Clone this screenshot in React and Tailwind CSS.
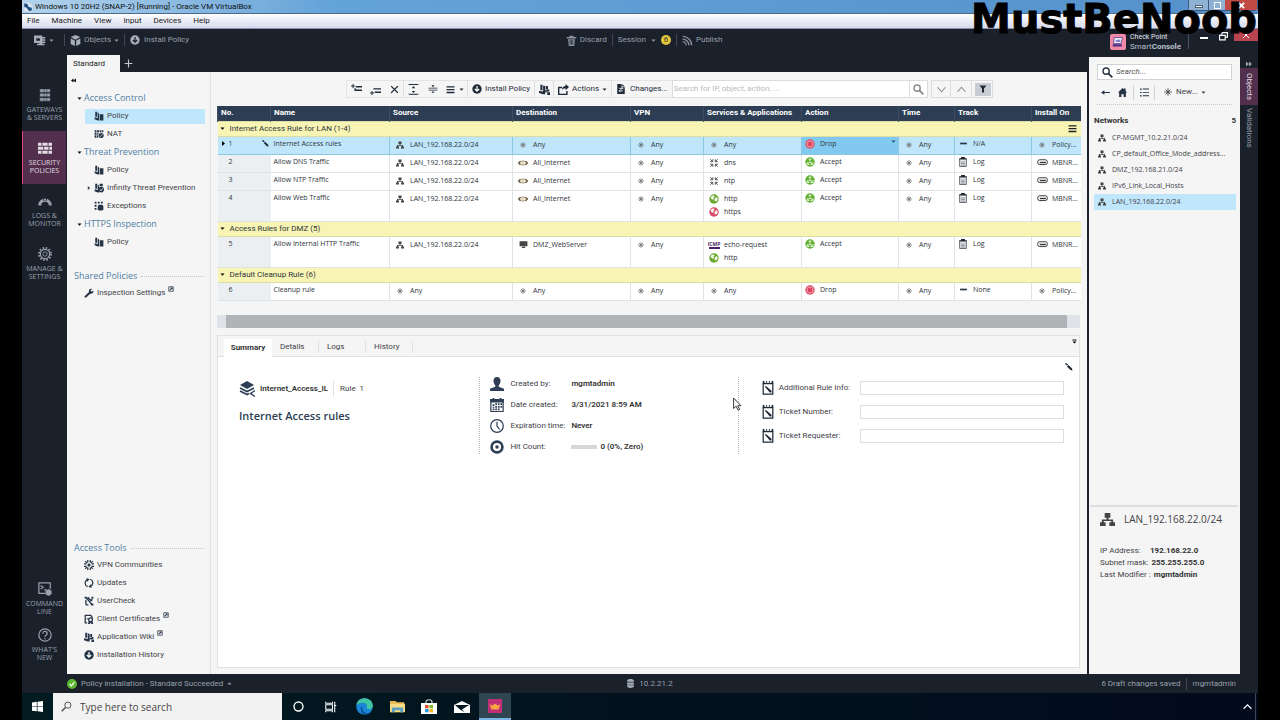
const Svg = ({ size = 10, box = 16, className = "", children }) => (
  <svg
    width={size}
    height={size}
    viewBox={`0 0 ${box} ${box}`}
    fill="currentColor"
    className={`shrink-0 ${className}`}
    aria-hidden="true"
  >
    {children}
  </svg>
);

const line = { fill: "none", stroke: "currentColor", strokeWidth: 2 };
const thin = { fill: "none", stroke: "currentColor", strokeWidth: 1.4 };

const NetworkIcon = (p) => (
  <Svg {...p}>
    <path d="M5 1h6v5H9v2h5v3h2v4h-6v-4h2V9.500H4V11h2v4H0v-4h2V8h5V6H5z" />
  </Svg>
);
const AnyIcon = (p) => (
  <Svg {...p}>
    <path d="M8 2v12M2 8h12M4 4l8 8M12 4l-8 8" {...thin} />
  </Svg>
);
const InternetIcon = (p) => (
  <Svg {...p}>
    <rect x="3" y="5" width="10" height="6" fill="#e6dfc4" />
    <path d="M4 5 1 8l3 3M12 5l3 3-3 3" fill="none" stroke="#5a4a2c" strokeWidth="2" />
    <path d="M5 5h6M5 11h6" stroke="#a2977a" strokeWidth="1.500" />
  </Svg>
);
const HostIcon = (p) => (
  <Svg {...p}>
    <path d="M1 2h14v9H1zM5 12h6v2H5z" />
  </Svg>
);
const ServiceIcon = (p) => (
  <Svg {...p}>
    <path d="M2 2l4 4M6 2v4H2M14 2l-4 4M10 2v4h4M2 14l4-4M6 14v-4H2M14 14l-4-4M10 14v-4h4" {...thin} />
  </Svg>
);
const GlobeIcon = ({ color, ...p }) => (
  <Svg {...p}>
    <circle cx="8" cy="8" r="7.500" fill={color} />
    <path d="M3 4l4-2 2 2-2 2 1 2-2 1-3-2zM10 6l3-1 1 3-2 4-3-1v-3z" fill="#f3f7ee" />
  </Svg>
);
const IcmpIcon = () => (
  <span className="flex h-[9px] w-[11px] shrink-0 items-center justify-center border-b-2 border-[#4d1f6b] text-[5px] leading-[6px] font-bold text-[#4d1f6b]">
    ICMP
  </span>
);
const DropIcon = (p) => (
  <Svg {...p}>
    <circle cx="8" cy="8" r="7.500" fill="#dd4560" />
    <circle cx="8" cy="8" r="5" fill="#dd4560" stroke="#f6ccd3" strokeWidth="1.200" />
  </Svg>
);
const AcceptIcon = (p) => (
  <Svg {...p}>
    <circle cx="8" cy="8" r="7.500" fill="#62b22f" />
    <path d="M8 3v4M6 4.500 8 2.500l2 2M8 8l-4 3M8 8l4 3M3.500 8.500V12H7M12.500 8.500V12H9" fill="none" stroke="#fff" strokeWidth="1.400" />
  </Svg>
);
const LogIcon = (p) => (
  <Svg {...p}>
    <path d="M2 2h3V0h6v2h3v3H2z" fill="#20252c" />
    <path d="M2.700 4v11.300h10.600V4" fill="#e8eaec" stroke="#4c525a" strokeWidth="1.400" />
    <path d="M5 8h6M5 10.500h6M5 13h6" stroke="#70767d" strokeWidth="1.200" />
  </Svg>
);
const DashIcon = (p) => (
  <Svg {...p}>
    <path d="M2 6.500h12v3H2z" />
  </Svg>
);
const GatewayIcon = (p) => (
  <Svg {...p}>
    <rect x="1" y="4" width="14" height="7" rx="3" {...thin} />
    <path d="M4 7h9v2H4z" />
  </Svg>
);
const InstallIcon = ({ arrow = "#fff", ...p }) => (
  <Svg {...p}>
    <circle cx="8" cy="8" r="7.500" />
    <path d="M8 3v8M4.500 8 8 11.500 11.500 8" fill="none" stroke={arrow} strokeWidth="2" />
  </Svg>
);
const PolicyIcon = (p) => (
  <Svg {...p}>
    <path d="M2 1h3v8H2zM1 10l5 1v4l-5-2zM6 2l2 2v11H6zM9 5h6v10H9z" />
  </Svg>
);
const NatIcon = (p) => (
  <Svg {...p}>
    <path d="M1 2h3v3H1zM5 2h3v3H5zM9 2h3v3H9zM13 2h2v3h-2zM1 6h3v3H1zM5 6h2v3H5zM1 10h3v4H1zM5 10h2v4H5z" />
    <circle cx="11.500" cy="10.500" r="4" />
    <path d="M9.500 12.500l4-4" stroke="#f4f4f4" strokeWidth="1.200" />
  </Svg>
);
const ThreatIcon = (p) => (
  <Svg {...p}>
    <path d="M2 1h3v8H2zM1 10l5 1v4l-5-2zM6 2l2 2v11H6zM9 1h5v4H9z" />
    <circle cx="11.500" cy="10.500" r="4.500" />
    <path d="M9.500 10.500l1.500 2 3-4" fill="none" stroke="#fff" strokeWidth="1.300" />
  </Svg>
);
const ExceptionIcon = (p) => (
  <Svg {...p}>
    <path d="M1 1h3v3H1zM6 1h3v3H6zM11 1h3v3h-3zM1 6h3v3H1zM1 11h3v3H1z" />
    <path d="M8 6h5l2 2v5l-2 2H8l-2-2V8z" />
  </Svg>
);
const WrenchIcon = (p) => (
  <Svg {...p}>
    <path d="M1 13 8 6.500C7 3.500 9.500.500 13 1.500L10.500 4l1.500 1.800L15 4c.8 3.500-2 6-5 5l-6.500 6C2 16 0 14.500 1 13z" />
  </Svg>
);
const ExternalIcon = (p) => (
  <Svg {...p}>
    <path d="M2 2h12v12H2z" {...line} />
    <path d="M6 4h6v6L10 8l-4 4-2-2 4-4z" />
  </Svg>
);
const VpnIcon = (p) => (
  <Svg {...p}>
    <path d="M5 0h2v4H5zM9 0h2v4H9zM5 12h2v4H5zM9 12h2v4H9zM0 5h4v2H0zM0 9h4v2H0zM12 5h4v2h-4zM12 9h4v2h-4z" />
    <circle cx="8" cy="8" r="2.500" />
    <path d="M2 2l3 3M14 2l-3 3M2 14l3-3M14 14l-3-3" {...line} />
  </Svg>
);
const UpdateIcon = (p) => (
  <Svg {...p}>
    <path d="M6 14A6 6 0 0 1 5 3M10 2a6 6 0 0 1 1 11" {...line} />
    <path d="M4 0l5 2-4 4zM12 16l-5-2 4-4z" />
  </Svg>
);
const UserCheckIcon = (p) => (
  <Svg {...p}>
    <path d="M3 14V6M3 2l10 12M6 2l6 6M3 14h4M12 8l1-4" {...line} />
    <path d="M1 1h3v3H1zM12 1h3v3h-3zM11 12h4v3h-4z" />
  </Svg>
);
const CertIcon = (p) => (
  <Svg {...p}>
    <path d="M5 14H2V2h9l2 3v2" {...line} />
    <circle cx="10.500" cy="9" r="3" {...line} />
    <path d="M8 11l-2 5h3l1.500-2 1.500 2h3l-2-5" />
    <path d="M4 7h4v1.500H4z" />
  </Svg>
);
const BundleIcon = (p) => (
  <Svg {...p}>
    <path d="M2 1h3v8H2zM0 10l6 1v4l-6-2zM6 2l3 1v12H6zM10 3h3v5h-3z" />
    <path d="M9 9h3v3H9zM12 12h4v4h-4zM12 8h3v3h-3z" />
  </Svg>
);
const PencilIcon = (p) => (
  <Svg {...p}>
    <path d="M0 0l4 1 2 2-2 2-2-1zM7 4l7 7 1 4-4-1-7-7z" />
  </Svg>
);
const MenuIcon = (p) => (
  <Svg {...p}>
    <path d="M1 2h14v2.500H1zM1 7h14v2.500H1zM1 12h14v2.500H1z" />
  </Svg>
);
const SearchIcon = ({ width = 2, ...p }) => (
  <Svg {...p}>
    <circle cx="6" cy="6" r="4.500" fill="none" stroke="currentColor" strokeWidth={width} />
    <path d="M9.500 9.500 15 15" stroke="currentColor" strokeWidth={width + 0.6} />
  </Svg>
);

const Caret = ({ className = "" }) => (
  <Svg size={5} box={10} className={className}>
    <path d="M1 3h8L5 7.500z" />
  </Svg>
);

const icons = {
  net: <NetworkIcon size={8} className="text-[#444]" />,
  any: <AnyIcon size={8} className="text-[#666]" />,
  inet: <InternetIcon size={10} />,
  host: <HostIcon size={9} className="text-[#444]" />,
  svc: <ServiceIcon size={10} className="text-[#444]" />,
  green: <GlobeIcon size={10} color="#6aa82f" />,
  red: <GlobeIcon size={10} color="#db4a66" />,
  icmp: <IcmpIcon />,
  drop: <DropIcon size={10} />,
  accept: <AcceptIcon size={10} />,
  log: <LogIcon size={10} />,
  dash: <DashIcon size={9} className="text-[#263447]" />,
  gw: <GatewayIcon size={11} className="text-[#333]" />,
};

const columns = [
  ["No.", 53],
  ["Name", 119],
  ["Source", 123],
  ["Destination", 118],
  ["VPN", 73],
  ["Services & Applications", 98],
  ["Action", 97],
  ["Time", 56],
  ["Track", 77],
  ["Install On", 49],
];

const lan = [["net", "LAN_192.168.22.0/24"]];
const any = [["any", "Any"]];
const internet = [["inet", "All_Internet"]];
const gateway = [["gw", "MBNR..."]];

const sections = [
  {
    title: "Internet Access Rule for LAN",
    range: "(1-4)",
    menu: true,
    rules: [
      { no: 1, name: "Internet Access rules", selected: true, cells: [lan, any, any, any, [["drop", "Drop"]], any, [["dash", "N/A"]], [["any", "Policy..."]]] },
      { no: 2, name: "Allow DNS Traffic", cells: [lan, internet, any, [["svc", "dns"]], [["accept", "Accept"]], any, [["log", "Log"]], gateway] },
      { no: 3, name: "Allow NTP Traffic", cells: [lan, internet, any, [["svc", "ntp"]], [["accept", "Accept"]], any, [["log", "Log"]], gateway] },
      { no: 4, name: "Allow Web Traffic", cells: [lan, internet, any, [["green", "http"], ["red", "https"]], [["accept", "Accept"]], any, [["log", "Log"]], gateway] },
    ],
  },
  {
    title: "Access Rules for DMZ",
    range: "(5)",
    rules: [
      { no: 5, name: "Allow Internal HTTP Traffic", cells: [lan, [["host", "DMZ_WebServer"]], any, [["icmp", "echo-request"], ["green", "http"]], [["accept", "Accept"]], any, [["log", "Log"]], gateway] },
    ],
  },
  {
    title: "Default Cleanup Rule",
    range: "(6)",
    rules: [
      { no: 6, name: "Cleanup rule", cells: [any, any, any, any, [["drop", "Drop"]], any, [["dash", "None"]], [["any", "Policy..."]]] },
    ],
  },
];

const RuleRow = ({ rule }) => {
  const tall = rule.cells.some((c) => c.length > 1);
  const border = rule.selected ? "border-[#8cc8e4]" : "border-[#dfe3e6]";
  return (
    <tr className={`${tall ? "h-[31px]" : "h-[18px]"} align-top ${rule.selected ? "bg-[#bfe6fb]" : "bg-white"}`}>
      <td className={`border-b ${border} ${rule.selected ? "" : "bg-[#eceff1]"} p-0`}>
        <div className="flex h-[14px] items-center pl-[3px]">
          <span className="w-2">
            {rule.selected && (
              <Svg size={5} box={10} className="text-black">
                <path d="M2 0v10l6-5z" />
              </Svg>
            )}
          </span>
          <span className="flex-1">{rule.no}</span>
          {rule.selected && <PencilIcon size={7} className="mr-[2px] text-[#1d2733]" />}
        </div>
      </td>
      <td className={`border-b ${border} p-0`}>
        <div className="flex h-[14px] items-center pl-[3px]">{rule.name}</div>
      </td>
      {rule.cells.map((cell, i) => {
        const wide = i === 4 || i === 6;
        const hot = rule.selected && i === 4;
        return (
          <td key={i} className={`border-b border-l ${border} ${hot ? "bg-[#82c9ef]" : ""} relative p-0`}>
            <div className={`flex flex-col gap-[1px] ${wide ? "pt-px pl-[2px]" : "pt-[2px] pl-[4px]"}`}>
              {cell.map(([icon, text]) => (
                <div key={text} className="flex h-3 items-center gap-1">
                  <span className="flex w-3 shrink-0 justify-center">{icons[icon]}</span>
                  <span className="whitespace-nowrap">{text}</span>
                </div>
              ))}
            </div>
            {hot && <Caret className="absolute top-[2px] right-[2px] text-[#23486b]" />}
          </td>
        );
      })}
    </tr>
  );
};

const RuleTable = () => (
  <table className="w-full table-fixed border-collapse font-['Open_Sans'] text-[7px] leading-[10px] text-[#2f343a]">
    <colgroup>
      {columns.map(([name, width]) => (
        <col key={name} style={{ width }} />
      ))}
    </colgroup>
    <thead>
      <tr className="h-[15px] bg-[#2d3e54] text-left font-['Roboto'] text-[8px] text-white">
        {columns.map(([name]) => (
          <th key={name} className="border-l border-[#3d4e63] py-0 pr-0 pl-[3px] font-bold whitespace-nowrap">
            {name}
          </th>
        ))}
      </tr>
    </thead>
    {sections.map((s) => (
      <tbody key={s.title}>
        <tr className="h-[15px] bg-[#f7f4b4]">
          <td colSpan={10} className="border-y border-[#dcdca6] p-0">
            <div className="flex items-center pr-1 pl-[2px] font-['Roboto'] text-[8px]">
              <Caret className="mr-[5px] text-black" />
              <span className="flex-1">
                {s.title} {s.range}
              </span>
              {s.menu && (
                <button aria-label="Section menu">
                  <MenuIcon size={9} className="text-[#222]" />
                </button>
              )}
            </div>
          </td>
        </tr>
        {s.rules.map((r) => (
          <RuleRow key={r.no} rule={r} />
        ))}
      </tbody>
    ))}
  </table>
);

const TitleBar = () => (
  <div className="flex h-[14px] items-center border-b border-[#4b6a8c] bg-linear-to-r from-[#b3d3ec] via-[#64a3d8] via-25% to-[#5590ca] pl-[1px]">
    <Svg size={10} className="text-[#1d4f80]">
      <path d="M1 1h9l5 5v9H1z" fill="#d9e6f0" />
      <path d="M2 2l5 1 2 5 5 1v5H9L6 9 2 8z" />
    </Svg>
    <span className="ml-[2px] flex-1 text-[8px] leading-[12px] text-[#111]">
      Windows 10 20H2 (SNAP-2) [Running] - Oracle VM VirtualBox
    </span>
    <div className="flex h-[11px] self-start rounded-b border border-t-0 border-[#3a5a7d] text-white">
      <button aria-label="Minimize VM" className="flex w-5 items-end justify-center border-r border-[#3a5a7d] bg-[#8fb2d4] pb-[2px]">
        <span className="h-[3px] w-2 border border-[#4a5e74] bg-white" />
      </button>
      <button aria-label="Restore VM" className="flex w-4 items-center justify-center bg-[#8fb2d4]">
        <span className="size-[7px] border border-white" />
      </button>
      <button aria-label="Close VM" className="flex w-8 items-center justify-center bg-[#c24a45]">
        <Svg size={7}>
          <path d="M2 2l12 12M14 2 2 14" {...line} strokeWidth="4" />
        </Svg>
      </button>
    </div>
  </div>
);

const MenuBar = () => (
  <nav className="flex h-[15px] items-center gap-3 border-b border-[#8c8fa5] bg-linear-to-b from-white to-[#d5d9ec] pl-[5px] text-[8px] leading-[12px] text-[#222]">
    {["File", "Machine", "View", "Input", "Devices", "Help"].map((m) => (
      <button key={m}>{m}</button>
    ))}
  </nav>
);

const Divider = ({ className = "" }) => <span className={`h-3 w-px bg-[#3d4652] ${className}`} />;

const AppHeader = () => (
  <header className="flex h-[26px] items-start text-[8px] leading-[10px] text-[#98a0ac]">
    <div className="flex h-[22px] flex-1 items-center pl-3">
      <button aria-label="Main menu" className="flex items-center gap-[3px]">
        <Svg size={12} className="text-[#a7aebb]">
          <path d="M0 2h11v2h4v2h-4v1h4v2h-4v1h4v2h-4v1h3v2H4v-2h3v-1H0zM3 5v4h5V5L7 6.500 5.500 5 4 6.500z" fillRule="evenodd" />
        </Svg>
        <Caret />
      </button>
      <Divider className="mr-[5px] ml-[10px]" />
      <button className="flex items-center gap-[3px]">
        <Svg size={11} className="text-[#a7aebb]">
          <path d="M8 0l7 3-7 4-7-4zM1 5l6 3v8l-6-3zM15 5 9 8v8l6-3z" />
        </Svg>
        Objects
        <Caret />
      </button>
      <Divider className="mx-[5px]" />
      <button className="flex items-center gap-1">
        <InstallIcon size={10} arrow="#1a212b" className="text-[#a7aebb]" />
        Install Policy
      </button>
    </div>
    <div className="flex h-[22px] items-center">
      <button className="flex items-center gap-[3px]">
        <Svg size={11} className="text-[#8a929e]">
          <path d="M1 3h14v2H1zM5 1h6v2H5zM3 6h10l-1 10H4z" />
          <path d="M6 7v7M8 7v7M10 7v7" stroke="#1a212b" />
        </Svg>
        Discard
      </button>
      <Divider className="mx-[5px]" />
      <button className="flex items-center gap-[5px]">
        Session
        <Caret />
        <span className="flex size-[10px] items-center justify-center rounded-full bg-[#e3c53a] text-[8px] leading-[8px] text-[#333]">6</span>
      </button>
      <Divider className="mx-[5px]" />
      <button className="mr-1 flex items-center gap-[3px]">
        <Svg size={11} className="text-[#8a929e]">
          <path d="M1 2a13 13 0 0 1 13 13M1 6a9 9 0 0 1 9 9M1 10a5 5 0 0 1 5 5" {...line} />
        </Svg>
        Publish
      </button>
    </div>
    <div className="flex flex-1 items-start justify-end">
      <div className="flex items-start gap-1 pt-1">
        <span className="mt-px flex size-4 items-center justify-center rounded-xs bg-[#f08aa6]">
          <Svg size={12}>
            <path d="M3 2h11l-2 8H2z" fill="#eef0fb" stroke="#4a3b8f" />
            <path d="M1 11h12v3H1z" fill="#4a2f8a" />
            <path d="M5 5h6v3H5z" fill="#8b7fd0" />
          </Svg>
        </span>
        <span className="flex w-[54px] flex-col text-[#e0e4ea]">
          <span className="text-[7px] leading-[9px]">Check Point</span>
          <span className="text-[8px] leading-[9px] text-[#b9c2d0]">
            Smart<b>Console</b>
          </span>
        </span>
        <span className="h-4 w-px bg-[#4a5361]" />
      </div>
      <div className="ml-[11px] flex items-start text-white">
        <button aria-label="Minimize" className="pt-[8px]">
          <span className="block h-[2px] w-2 bg-white" />
        </button>
        <button aria-label="Restore" className="mr-[6px] ml-[11px] pt-[3px]">
          <Svg size={9}>
            <path d="M5 5V1h10v8h-4M1 6h10v8H1z" {...line} />
          </Svg>
        </button>
        <button aria-label="Close" className="flex h-3 w-6 items-center justify-center bg-[#b9434e]">
          <Svg size={8}>
            <path d="M2 2l12 12M14 2 2 14" {...line} />
          </Svg>
        </button>
      </div>
    </div>
  </header>
);

const railIcons = {
  servers: <path d="M2 1h12v4H2zM2 6h12v4H2zM2 11h12v4H2zM7 1v14M10 1v14" stroke="#1a212b" strokeWidth=".5" />,
  wall: <path d="M0 2h4v3.500H0zM5 2h6v3.500H5zM12 2h4v3.500h-4zM0 6.500h6V10H0zM7 6.500h5V10H7zM13 6.500h3V10h-3zM0 11h4v3.500H0zM5 11h6v3.500H5zM12 11h4v3.500h-4z" />,
  gauge: (
    <>
      <path d="M2 13a6 6 0 0 1 12 0" fill="none" stroke="currentColor" strokeWidth="3.500" />
      <path d="M5 3l2 5M11 3 9 8" stroke="#1a212b" />
    </>
  ),
  gear: (
    <>
      <circle cx="8" cy="8" r="7" fill="none" stroke="currentColor" strokeWidth="2" strokeDasharray="1.800 1.860" />
      <circle cx="8" cy="8" r="5.300" fill="none" stroke="currentColor" strokeWidth="1.300" />
      <circle cx="8" cy="8" r="2.500" fill="none" stroke="currentColor" />
    </>
  ),
  terminal: (
    <>
      <path d="M8 13H1V1h13v7M3 4l3 2-3 2M7 9h3" {...thin} />
      <path d="M12 8l3.500 2v4L12 16l-3.500-2v-4z" />
    </>
  ),
  help: (
    <>
      <circle cx="8" cy="8" r="7" {...thin} />
      <path d="M5.500 6.500c0-4 5-3 5 0 0 1.500-2.500 1.500-2.500 3.500M8 11v1.800" {...thin} />
    </>
  ),
};

const RailItem = ({ icon, lines, active }) => (
  <button
    className={`flex h-[53px] w-full flex-col items-center border-l pt-[10px] font-['Open_Sans'] text-[7px] leading-[8px] uppercase ${
      active ? "border-[#e0487a] bg-[#52304d] text-[#e3dde4]" : "border-transparent text-[#98a0ac]"
    }`}
  >
    <Svg size={14} className="mb-1">
      {railIcons[icon]}
    </Svg>
    {lines.map((l) => (
      <span key={l}>{l}</span>
    ))}
  </button>
);

const Rail = () => (
  <nav className="flex w-[45px] shrink-0 flex-col pt-[23px] pr-px">
    <RailItem icon="servers" lines={["Gateways", "& Servers"]} />
    <RailItem icon="wall" lines={["Security", "Policies"]} active />
    <RailItem icon="gauge" lines={["Logs &", "Monitor"]} />
    <RailItem icon="gear" lines={["Manage &", "Settings"]} />
    <div className="mt-auto flex flex-col pb-[3px]">
      <div className="-mb-[7px]">
        <RailItem icon="terminal" lines={["Command", "Line"]} />
      </div>
      <RailItem icon="help" lines={["What's", "New"]} />
    </div>
  </nav>
);

const TreeHead = ({ children }) => (
  <button className="flex h-[18px] w-full items-center pl-[10px] font-['Open_Sans'] text-[9px] leading-3 text-[#4f7fa5]">
    <Caret className="mr-[2px] text-black" />
    {children}
  </button>
);

const TreeItem = ({ Icon, label, active, arrow }) => (
  <a href="#" className="flex h-[18px] items-center pr-[5px] pl-[18px]">
    <span className={`flex h-[15px] flex-1 items-center gap-[3px] whitespace-nowrap ${active ? "bg-[#bfe6fb]" : ""}`}>
      <span className="flex w-[6px] justify-end">
        {arrow && (
          <Svg size={4} box={10}>
            <path d="M2 0v10l6-5z" />
          </Svg>
        )}
      </span>
      <Icon size={10} className="text-[#263447]" />
      {label}
    </span>
  </a>
);

const ToolGroup = ({ title, items }) => (
  <div className="pl-[7px]">
    <h3 className="flex h-4 items-center gap-1 pr-[5px] font-['Open_Sans'] text-[9px] leading-3 text-[#4f7fa5]">
      {title}
      <span className="flex-1 border-b border-dotted border-[#c4c8cc]" />
    </h3>
    {items.map(([Icon, label, ext]) => (
      <a key={label} href="#" className="flex h-[18px] items-center gap-[3px] pl-[10px] whitespace-nowrap">
        <Icon size={10} className="text-[#263447]" />
        {label}
        {ext && <ExternalIcon size={6} className="mb-2 text-[#263447]" />}
      </a>
    ))}
  </div>
);

const PolicyTree = () => (
  <aside className="flex w-[144px] shrink-0 flex-col border-r border-[#e0e0e2] pb-[10px] text-[8px] leading-[10px] text-[#3f4247]">
    <button aria-label="Collapse" className="flex h-[17px] items-center pl-1">
      <Svg size={5} box={10} className="text-black">
        <path d="M5 1v8L0 5zM10 1v8L5 5z" />
      </Svg>
    </button>
    <TreeHead>Access Control</TreeHead>
    <TreeItem Icon={PolicyIcon} label="Policy" active />
    <TreeItem Icon={NatIcon} label="NAT" />
    <TreeHead>Threat Prevention</TreeHead>
    <TreeItem Icon={PolicyIcon} label="Policy" />
    <TreeItem Icon={ThreatIcon} label="Infinity Threat Prevention" arrow />
    <TreeItem Icon={ExceptionIcon} label="Exceptions" />
    <TreeHead>HTTPS Inspection</TreeHead>
    <TreeItem Icon={PolicyIcon} label="Policy" />
    <div className="mt-[17px]">
      <ToolGroup title="Shared Policies" items={[[WrenchIcon, "Inspection Settings", true]]} />
    </div>
    <div className="mt-auto">
      <ToolGroup
        title="Access Tools"
        items={[
          [VpnIcon, "VPN Communities"],
          [UpdateIcon, "Updates"],
          [UserCheckIcon, "UserCheck"],
          [CertIcon, "Client Certificates", true],
          [BundleIcon, "Application Wiki", true],
          [InstallIcon, "Installation History"],
        ]}
      />
    </div>
  </aside>
);

const ToolSep = () => <span className="h-4 w-px bg-[#dcdde0]" />;

const Toolbar = () => (
  <div className="flex h-[18px] items-stretch gap-[3px] pr-[87px] pl-[129px] text-[8px] leading-[10px] text-[#33383f]">
    <div className="flex items-center border border-[#e4e4e6] text-[#1f2a38]">
      <button aria-label="Add rule above" className="flex w-[19px] justify-center">
        <Svg size={11}>
          <path d="M0 3h6M3 0v6" {...thin} />
          <path d="M7 3h9v2H7zM5 8h11v2H5zM5 6h2v3H5z" />
        </Svg>
      </button>
      <button aria-label="Add rule below" className="flex w-[19px] justify-center">
        <Svg size={11}>
          <path d="M0 13h6M3 10v6" {...thin} />
          <path d="M5 6h11v2H5zM7 11h9v2H7z" />
        </Svg>
      </button>
      <button aria-label="Delete rule" className="flex w-[18px] justify-center">
        <Svg size={9}>
          <path d="M2 2l12 12M14 2 2 14" {...line} strokeWidth="2.500" />
        </Svg>
      </button>
      <ToolSep />
      <button aria-label="Expand sections" className="flex w-[19px] justify-center">
        <Svg size={11}>
          <path d="M1 0h14v1.500H1zM1 14h14v1.500H1zM8 3l2.500 3h-5zM8 13l-2.500-3h5z" />
        </Svg>
      </button>
      <button aria-label="Collapse sections" className="flex w-[19px] justify-center">
        <Svg size={10}>
          <path d="M1 6h14v1.300H1zM1 9h14v1.300H1zM8 5 5.500 2h5zM8 11l2.500 3h-5z" />
        </Svg>
      </button>
      <button aria-label="View options" className="flex w-[25px] items-center justify-center gap-1">
        <MenuIcon size={9} />
        <Caret />
      </button>
      <ToolSep />
      <button className="flex items-center gap-[3px] px-1 whitespace-nowrap">
        <InstallIcon size={10} />
        Install Policy
      </button>
      <ToolSep />
      <button aria-label="Packages" className="flex w-[18px] justify-center">
        <BundleIcon size={11} />
      </button>
      <ToolSep />
      <button className="flex items-center gap-[3px] px-1">
        <Svg size={11}>
          <path d="M6 5H1v10h12v-5" {...line} />
          <path d="M6 9c0-4 2-6 5-6V0l5 4.500L11 9V6C8 6 7 7 6 9z" />
        </Svg>
        Actions
        <Caret />
      </button>
      <ToolSep />
      <button className="flex items-center gap-1 px-1">
        <Svg size={10}>
          <path d="M2 0h7v5h5v11H2zM10 0l4 4h-4z" />
          <path d="M5 7h6M11 11H5M9 5l2 2-2 2M7 9l-2 2 2 2" fill="none" stroke="#fff" strokeWidth="1.300" />
        </Svg>
        Changes...
      </button>
    </div>
    <div className="-ml-1 flex flex-1 border border-[#dcdde0] bg-white">
      <input
        aria-label="Search rules"
        placeholder="Search for IP, object, action, ..."
        className="min-w-0 flex-1 px-[1px] outline-none placeholder:text-[#b9bbbe]"
      />
      <button aria-label="Search" className="flex w-[18px] items-center justify-center border-l border-[#dcdde0]">
        <SearchIcon size={11} className="text-[#85888c]" />
      </button>
    </div>
    <div className="flex items-center border border-[#dcdde0] text-[#85888c]">
      <button aria-label="Next match" className="flex w-[18px] justify-center">
        <Svg size={9}>
          <path d="M1 4l7 8 7-8" {...line} />
        </Svg>
      </button>
      <ToolSep />
      <button aria-label="Previous match" className="flex w-[20px] justify-center">
        <Svg size={9}>
          <path d="M1 12l7-8 7 8" {...line} />
        </Svg>
      </button>
      <ToolSep />
      <button aria-label="Filter" className="mr-px ml-[3px] flex h-[13px] w-4 items-center justify-center bg-[#c8cdd4]">
        <Svg size={8} className="text-[#1f2a38]">
          <path d="M1 1h14l-5 6v8H6V7z" />
        </Svg>
      </button>
    </div>
  </div>
);

const facts = [
  [
    "Created by:",
    "mgmtadmin",
    <path d="M8 0c3 0 4 2 4 4.500S10.500 9 10 9.500V11l6 2.500V16H0v-2.500L6 11V9.500C5.500 9 4 7 4 4.500S5 0 8 0z" />,
  ],
  [
    "Date created:",
    "3/31/2021 8:59 AM",
    <>
      <path d="M1 2h14v13.500H1z" {...thin} />
      <path d="M0 1h3V0h2v1h6V0h2v1h3v4H0zM3 7h2v2H3zM6 6h2v2H6zM9 6h2v2H9zM12 6h2v2h-2zM3 10h2v1H3zM6 9h2v2H6zM9 9h2v2H9zM12 9h2v2h-2zM3 12h2v2H3zM6 12h2v2H6zM9 12h2v2H9z" />
    </>,
  ],
  [
    "Expiration time:",
    "Never",
    <>
      <circle cx="8" cy="8" r="7.200" {...thin} />
      <path d="M8 3v5l3 4" {...thin} />
    </>,
  ],
  [
    "Hit Count:",
    "0 (0%, Zero)",
    <>
      <circle cx="8" cy="8" r="6.200" fill="none" stroke="currentColor" strokeWidth="3" />
      <circle cx="8" cy="8" r="2" />
    </>,
  ],
];

const SummaryPanel = () => (
  <section className="mt-[7px] flex flex-1 flex-col border border-[#e1e1e3] bg-white text-[8px] leading-[10px] text-[#3f4247]">
    <div className="flex h-[21px] items-end border-b border-[#e1e1e3] bg-[#f5f5f5] pl-[6px]">
      <button className="-mb-px flex h-[18px] w-12 items-center justify-center bg-white font-bold text-[#333]">Summary</button>
      {["Details", "Logs", "History"].map((t) => (
        <button key={t} className="my-[3px] flex h-3 w-[47px] items-center border-r border-[#e1e1e3] pl-2">
          {t}
        </button>
      ))}
      <button aria-label="Collapse panel" className="mb-3 ml-auto pr-[2px] text-black">
        <Svg size={5} box={10}>
          <path d="M1 1h8v2H1zM1 5h8L5 9z" />
        </Svg>
      </button>
    </div>
    <div className="flex h-5 items-center justify-end pr-[6px]">
      <button aria-label="Edit">
        <PencilIcon size={8} className="text-[#1d2733]" />
      </button>
    </div>
    <div className="grid grid-cols-[262fr_259fr_342fr]">
      <div className="pl-[21px]">
        <div className="flex h-6 items-center">
          <Svg size={16} className="mr-[5px] text-[#2d3e54]">
            <path d="M8 0l7 4-7 4-7-4z" />
            <path d="M1 7l7 3.500L15 7M1 10l7 3.500L10 12.500" {...line} strokeWidth="1.600" />
            <path d="M16 9.500 11.500 12.500l4.500 3" {...thin} />
          </Svg>
          <span className="font-semibold text-[#333]">Internet_Access_IL</span>
          <span className="mr-[6px] ml-[5px] h-4 w-px bg-[#e1e1e3]" />
          <span className="whitespace-pre">Rule  1</span>
        </div>
        <h2 className="mt-[7px] font-['Open_Sans'] text-[11px] leading-4 font-semibold text-[#2d3e54]">Internet Access rules</h2>
      </div>
      <dl className="flex flex-col gap-[7px] border-l border-dotted border-[#b4b8bd] pl-[10px]">
        {facts.map(([label, value, icon]) => (
          <div key={label} className="flex h-[14px] items-center">
            <Svg size={14} className="text-[#2d3e54]">
              {icon}
            </Svg>
            <dt className="ml-[6px] w-[61px] whitespace-nowrap">{label}</dt>
            <dd className="flex items-center gap-[3px] font-semibold whitespace-nowrap text-[#333]">
              {label === "Hit Count:" && <span className="h-1 w-[26px] bg-[#d6d7d9]" />}
              {value}
            </dd>
          </div>
        ))}
      </dl>
      <div className="flex flex-col gap-[10px] border-l border-dotted border-[#b4b8bd] pt-1 pr-[15px] pl-[23px]">
        {["Additional Rule Info:", "Ticket Number:", "Ticket Requester:"].map((label) => (
          <label key={label} className="flex h-[14px] items-center">
            <Svg size={14} className="-ml-px text-[#1f2a38]">
              <path d="M2.500 3h11v12h-11z" {...thin} />
              <path d="M2 0h2v3H2zM6 0h1v3H6zM9 0h1v3H9zM12 0h2v3h-2zM4 6l2 0 6 5v2h-2z" />
            </Svg>
            <span className="ml-1 w-[81px] whitespace-nowrap">{label}</span>
            <input className="h-[14px] min-w-0 flex-1 border border-[#dcdde0] bg-white px-1 outline-none" />
          </label>
        ))}
      </div>
    </div>
  </section>
);

const networks = [
  "CP-MGMT_10.2.21.0/24",
  "CP_default_Office_Mode_address...",
  "DMZ_192.168.21.0/24",
  "IPv6_Link_Local_Hosts",
  "LAN_192.168.22.0/24",
];

const ObjectsPanel = () => (
  <aside className="mt-[2px] flex w-[151px] shrink-0 flex-col bg-[#f5f5f5] text-[8px] leading-[10px] text-[#3f4247]">
    <div className="mx-2 mt-[7px] flex h-4 items-center gap-[3px] border border-[#d0d2d5] bg-white pl-1">
      <SearchIcon size={11} className="text-[#263447]" />
      <input
        aria-label="Search objects"
        placeholder="Search..."
        className="min-w-0 flex-1 italic outline-none placeholder:text-[#555]"
      />
    </div>
    <div className="mx-2 flex h-[25px] items-center border-b border-dotted border-[#c4c8cc] pl-1 text-[#263447]">
      <button aria-label="Back">
        <Svg size={9}>
          <path d="M6 4v3h10v2H6v3L0 8z" />
        </Svg>
      </button>
      <button aria-label="Home" className="ml-2">
        <Svg size={9}>
          <path d="M8 0l2.500 2V1h3v4L16 8h-2v8h-4v-5H6v5H2V8H0z" />
        </Svg>
      </button>
      <span className="mx-[6px] h-[15px] w-px bg-[#d0d2d5]" />
      <button aria-label="List view">
        <Svg size={9}>
          <path d="M0 1h3v2H0zM5 1h11v1.500H5zM0 7h3v2H0zM5 7h11v1.500H5zM0 13h3v2H0zM5 13h11v1.500H5z" />
        </Svg>
      </button>
      <span className="mr-[8px] ml-[5px] h-[15px] w-px bg-[#d0d2d5]" />
      <button className="flex items-center gap-[3px] text-[#3f4247]">
        <AnyIcon size={10} />
        New...
        <Caret />
      </button>
    </div>
    <h3 className="mt-2 mr-1 ml-[5px] flex h-[15px] items-center justify-between font-bold text-[#333]">
      Networks <span>5</span>
    </h3>
    <ul className="mt-[2px] mr-1 ml-[5px] font-['Open_Sans'] text-[7px]">
      {networks.map((n) => (
        <li key={n}>
          <a
            href="#"
            className={`flex h-4 items-center gap-[6px] pl-1 whitespace-nowrap ${n.startsWith("LAN") ? "bg-[#bfe6fb]" : ""}`}
          >
            <NetworkIcon size={8} className="text-[#444]" />
            {n}
          </a>
        </li>
      ))}
    </ul>
    <div className="mt-auto mr-[2px] ml-[1px] h-[169px] border-t-2 border-[#dedee0] pt-1 pl-[10px]">
      <div className="flex items-center gap-[9px] font-['Open_Sans'] text-[10px] leading-4">
        <NetworkIcon size={15} className="text-[#444]" />
        LAN_192.168.22.0/24
      </div>
      <dl className="mt-[18px] leading-3">
        {[
          ["IP Address:", "192.168.22.0"],
          ["Subnet mask:", "255.255.255.0"],
          ["Last Modifier :", "mgmtadmin"],
        ].map(([k, v]) => (
          <div key={k} className="flex gap-[3px]">
            <dt className="min-w-[47px]">{k}</dt>
            <dd className="font-bold text-[#333]">{v}</dd>
          </div>
        ))}
      </dl>
    </div>
  </aside>
);

const SideTabs = () => (
  <div className="flex w-[18px] shrink-0 flex-col items-center text-[8px] leading-[10px] text-[#98a0ac]">
    <button aria-label="Collapse objects" className="flex h-[13px] items-center pt-1">
      <Svg size={6} box={10}>
        <path d="M0 1v8l5-4zM5 1v8l5-4z" />
      </Svg>
    </button>
    <button className="flex h-[37px] w-full items-center justify-center bg-[#52304d] text-[#e3dde4] [writing-mode:vertical-rl]">
      Objects
    </button>
    <button className="flex h-[46px] w-full items-center justify-center [writing-mode:vertical-rl]">Validations</button>
  </div>
);

const StatusBar = () => (
  <footer className="flex h-[19px] items-center text-[8px] leading-[10px] text-[#98a0ac]">
    <button className="flex flex-1 items-center gap-1 pl-[45px]">
      <Svg size={10}>
        <circle cx="8" cy="8" r="8" fill="#5cb82c" />
        <path d="M4 8l3 3 5-6" fill="none" stroke="#fff" strokeWidth="2" />
      </Svg>
      Policy installation - Standard Succeeded
      <Caret className="rotate-180" />
    </button>
    <span className="mr-1 flex items-center gap-1">
      <Svg size={9} className="text-[#a7aebb]">
        <path d="M2 3c0-4 12-4 12 0v2H2zM2 6h12v4H2zM2 11h12v2c0 4-12 4-12 0z" />
      </Svg>
      10.2.21.2
    </span>
    <span className="flex flex-1 items-center justify-end pr-[22px]">
      6 Draft changes saved
      <Divider className="mr-[6px] ml-[5px]" />
      mgmtadmin
    </span>
  </footer>
);

const Taskbar = () => (
  <div className="flex h-[27px] items-stretch bg-linear-to-r from-[#021b20] to-[#020a1c] text-white">
    <button aria-label="Start" className="flex w-[31px] items-center justify-center">
      <Svg size={11}>
        <path d="M0 2l7-1v6.500H0zM8 1l8-1v7.500H8zM0 8.500h7V15l-7-1zM8 8.500h8V16l-8-1z" />
      </Svg>
    </button>
    <label className="flex w-[229px] items-center gap-2 bg-[#f2f2f2] pl-[8px] text-[#444]">
      <SearchIcon size={11} width={1.3} className="-scale-x-100" />
      <input
        aria-label="Type here to search"
        placeholder="Type here to search"
        className="min-w-0 flex-1 font-['Open_Sans'] text-[10px] leading-4 outline-none placeholder:text-[#444]"
      />
    </label>
    <button aria-label="Cortana" className="flex w-[33px] items-center justify-center">
      <Svg size={11}>
        <circle cx="8" cy="8" r="6.500" {...line} />
      </Svg>
    </button>
    <button aria-label="Task view" className="flex w-8 items-center justify-center">
      <Svg size={12}>
        <path d="M1 1v2h9V1M1 15v-2h9v2M1 5h9v6H1zM13 1v14M12 6h3" {...thin} />
      </Svg>
    </button>
    <button aria-label="Edge" className="flex w-[34px] items-center justify-center">
      <Svg size={17}>
        <circle cx="8" cy="8" r="7.800" fill="#1b86d6" />
        <path d="M.3 7C1 2 4.500.2 8 .2c5 0 8 3.600 7.800 7 0 2.600-2.600 3.800-5 3.200-1-.3-1-.8-.6-1.400C11.500 6 8 4 5 4.500 2.500 5 .8 6 .3 7z" fill="#3fc6a0" />
        <path d="M6 8c-1 3 1 6 5 6.300 1.500 0 2.500-.5 3.300-1.200C11 17 5 15.500 4.500 11 4.300 9 5 8.300 6 8z" fill="#0d4a94" />
      </Svg>
    </button>
    <button aria-label="File Explorer" className="flex w-8 items-center justify-center">
      <Svg size={15}>
        <path d="M0 2h6l1.500 1.500H15V14H0z" fill="#e8b74a" />
        <path d="M0 5h16v9H0z" fill="#f8dc84" />
        <path d="M2 14V9h12v5h-3v-2H5v2z" fill="#5aa0c4" />
      </Svg>
    </button>
    <button aria-label="Store" className="flex w-8 items-center justify-center">
      <Svg size={16}>
        <path d="M5 5V3c0-3 6-3 6 0v2" fill="none" stroke="#cfd5d8" strokeWidth="1.200" />
        <path d="M0 4h16v11H0z" fill="#fff" />
        <path d="M4 6h3.600v3.300H4z" fill="#e2542c" />
        <path d="M8.400 6H12v3.300H8.400z" fill="#7db72f" />
        <path d="M4 10h3.600v3.300H4z" fill="#2d9be0" />
        <path d="M8.400 10H12v3.300H8.400z" fill="#f2b51d" />
      </Svg>
    </button>
    <button aria-label="Mail" className="flex w-[34px] items-center justify-center">
      <Svg size={16}>
        <path d="M0 6l8-4 8 4v8H0z" fill="#fff" />
        <path d="M1 6h14L8 10.500l3 3-5-3z" fill="#04171f" />
      </Svg>
    </button>
    <button aria-label="SmartConsole" className="flex w-8 items-center justify-center border-b-2 border-[#78b4e4] bg-[#2f454f]">
      <Svg size={14}>
        <path d="M0 0h16v16H0z" fill="#c22f79" />
        <path d="M2 6l3 1.500L8 5l3 2.500L14 6l-2 6H4z" fill="#f7a543" />
      </Svg>
    </button>
    <button aria-label="Show hidden icons" className="mr-[2px] ml-auto flex w-[17px] items-center justify-center border-r border-[#3c4756]">
      <Svg size={9}>
        <path d="M1 12l7-7 7 7" {...line} />
      </Svg>
    </button>
  </div>
);

const App = () => {
  return (
    <div className="relative flex min-h-screen flex-col bg-black px-[22px] font-['Roboto','Open_Sans',sans-serif]">
      <TitleBar />
      <MenuBar />
      <div className="flex flex-1 flex-col bg-[#1a212b]">
        <AppHeader />
        <div className="flex flex-1">
          <Rail />
          <main className="flex min-w-0 flex-1 flex-col">
            <div className="flex h-[17px] items-center">
              <button className="h-full w-[53px] bg-[#f5f5f5] pr-[9px] text-[8px] leading-[10px] text-[#222]">Standard</button>
              <button aria-label="New tab" className="ml-1 text-[#c3c8d0]">
                <Svg size={9}>
                  <path d="M8 1v14M1 8h14" {...line} />
                </Svg>
              </button>
            </div>
            <div className="flex flex-1 bg-[#f5f5f5]">
              <PolicyTree />
              <div className="flex min-w-0 flex-1 flex-col pt-2 pr-[7px] pb-[6px] pl-[6px]">
                <Toolbar />
                <div className="mt-2">
                  <RuleTable />
                </div>
                <div className="mt-[14px] h-[13px] bg-[#dfe2e6] pr-[13px] pl-[9px]">
                  <div className="h-full bg-[#b1b4b7]" />
                </div>
                <SummaryPanel />
              </div>
            </div>
          </main>
          <div className="w-[2px]" />
          <ObjectsPanel />
          <SideTabs />
        </div>
        <StatusBar />
      </div>
      <Taskbar />

      <Svg size={13} className="absolute top-[398px] left-[732px]">
        <path d="M2 0v13l3-3 2.500 5 2-1L7 9.500h4z" fill="#fff" stroke="#333" strokeWidth="1.200" />
      </Svg>
      <div className="pointer-events-none absolute top-0 right-[23px] font-['DejaVu_Sans'] text-[40px] leading-[38px] font-bold text-black [-webkit-text-stroke:1px_black]">
        MustBeNoob
      </div>
    </div>
  );
};

export default App;
